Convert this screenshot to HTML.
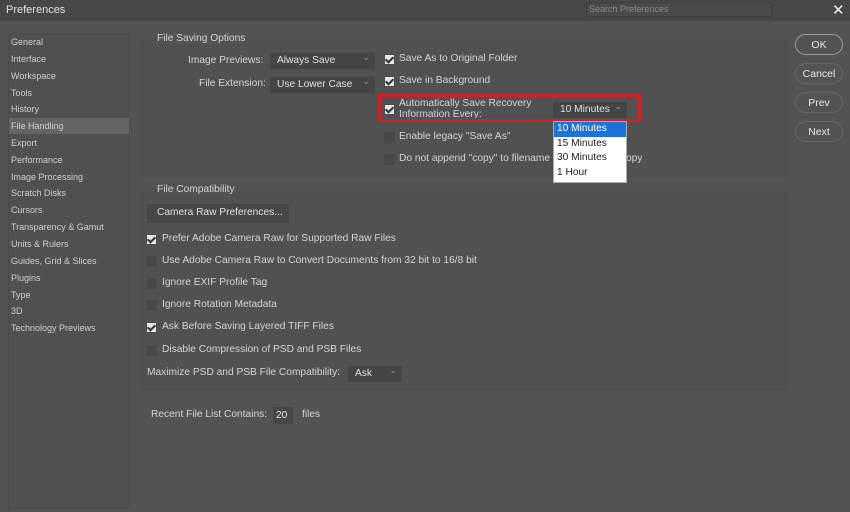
<!DOCTYPE html>
<html><head><style>
*{margin:0;padding:0;box-sizing:border-box}
body{width:850px;height:512px;background:#535353;font-family:"Liberation Sans",sans-serif;font-size:10.2px;color:#d4d4d4;position:relative;overflow:hidden}
.a{position:absolute;white-space:nowrap}
.title{left:0;top:0;width:850px;height:21px;background:#474747}
.side{left:8px;top:33px;width:122px;height:476px;background:#505050;border:1px solid #4a4a4a}
.si{left:11px;font-size:9px;color:#cfcfcf}
.box{border:1px solid #4d4d4d;background:#515151}
.sel{background:#454545;color:#e0e0e0;height:16px;padding:2px 0 0 7px}
.sel:after{content:"⌄";position:absolute;right:5px;top:-1px;color:#999;font-size:9px}
.cb{width:11px;height:11px;background:#484848;border:1px solid #4a4a4a}
.cb.on{background:#e6e6e6}
.cb.on:after{content:"";position:absolute;left:2px;top:0px;width:3px;height:6px;border:solid #333;border-width:0 2px 2px 0;transform:rotate(45deg)}
.btn{left:795px;width:48px;height:21px;border:1.5px solid #9a9a9a;border-radius:11px;text-align:center;line-height:20px;color:#e6e6e6;font-size:10.5px}
.btn.n{border-color:#666}
</style></head><body>
<div class="a title"></div>
<div class="a" style="left:6px;top:4px;font-size:11px;color:#e0e0e0">Preferences</div>
<div class="a" style="left:586px;top:2px;width:186px;height:15px;background:#4a4a4a;border:1px solid #3e3e3e;color:#8a8a8a;font-size:9px;padding:1px 2px">Search Preferences</div>
<div class="a" style="left:832px;top:1px;font-size:15px;color:#eee">✕</div>

<div class="a side"></div>
<div class="a" style="left:9px;top:118px;width:120px;height:16px;background:#646464"></div>
<div class="a si" style="top:37px">General</div>
<div class="a si" style="top:54px">Interface</div>
<div class="a si" style="top:71px">Workspace</div>
<div class="a si" style="top:88px">Tools</div>
<div class="a si" style="top:104px">History</div>
<div class="a si" style="top:121px">File Handling</div>
<div class="a si" style="top:138px">Export</div>
<div class="a si" style="top:155px">Performance</div>
<div class="a si" style="top:172px">Image Processing</div>
<div class="a si" style="top:188px">Scratch Disks</div>
<div class="a si" style="top:205px">Cursors</div>
<div class="a si" style="top:222px">Transparency &amp; Gamut</div>
<div class="a si" style="top:239px">Units &amp; Rulers</div>
<div class="a si" style="top:256px">Guides, Grid &amp; Slices</div>
<div class="a si" style="top:273px">Plugins</div>
<div class="a si" style="top:290px">Type</div>
<div class="a si" style="top:306px">3D</div>
<div class="a si" style="top:323px">Technology Previews</div>

<div class="a box" style="left:141px;top:40px;width:646px;height:137px"></div>
<div class="a" style="left:154px;top:33px;background:#535353;padding:0 3px">File Saving Options</div>
<div class="a" style="left:188px;top:55px">Image Previews:</div>
<div class="a sel" style="left:270px;top:53px;width:105px">Always Save</div>
<div class="a" style="left:199px;top:78px">File Extension:</div>
<div class="a sel" style="left:270px;top:77px;width:105px">Use Lower Case</div>
<div class="a cb on" style="left:384px;top:54px"></div><div class="a" style="left:399px;top:53px">Save As to Original Folder</div>
<div class="a cb on" style="left:384px;top:76px"></div><div class="a" style="left:399px;top:75px">Save in Background</div>
<div class="a cb on" style="left:384px;top:104px"></div>
<div class="a" style="left:399px;top:98px;line-height:11px;height:20px;overflow:hidden">Automatically Save Recovery<br>Information Every:</div>
<div class="a sel" style="left:553px;top:102px;width:74px">10 Minutes</div>
<div class="a" style="left:378px;top:94px;width:263px;height:28px;border:3px solid #d2202b"></div>
<div class="a cb" style="left:384px;top:132px"></div><div class="a" style="left:399px;top:131px">Enable legacy "Save As"</div>
<div class="a cb" style="left:384px;top:154px"></div><div class="a" style="left:399px;top:153px">Do not append "copy" to filename when saving a copy</div>
<div class="a" style="left:553px;top:121px;width:74px;height:62px;background:#fff;border:1px solid #aaa;color:#222;line-height:14.5px;padding-left:3px">
<div style="background:#1e73d8;color:#fff;margin-left:-3px;padding-left:3px">10 Minutes</div>15 Minutes<br>30 Minutes<br>1 Hour</div>

<div class="a box" style="left:141px;top:192px;width:646px;height:198px"></div>
<div class="a" style="left:154px;top:184px;background:#535353;padding:0 3px">File Compatibility</div>
<div class="a" style="left:147px;top:204px;width:142px;height:19px;background:#474747;padding:3px 0 0 10px;color:#e0e0e0">Camera Raw Preferences...</div>
<div class="a cb on" style="left:146px;top:234px"></div><div class="a" style="left:162px;top:233px">Prefer Adobe Camera Raw for Supported Raw Files</div>
<div class="a cb" style="left:146px;top:256px"></div><div class="a" style="left:162px;top:255px">Use Adobe Camera Raw to Convert Documents from 32 bit to 16/8 bit</div>
<div class="a cb" style="left:146px;top:278px"></div><div class="a" style="left:162px;top:277px">Ignore EXIF Profile Tag</div>
<div class="a cb" style="left:146px;top:300px"></div><div class="a" style="left:162px;top:299px">Ignore Rotation Metadata</div>
<div class="a cb on" style="left:146px;top:322px"></div><div class="a" style="left:162px;top:321px">Ask Before Saving Layered TIFF Files</div>
<div class="a cb" style="left:146px;top:345px"></div><div class="a" style="left:162px;top:344px">Disable Compression of PSD and PSB Files</div>
<div class="a" style="left:147px;top:367px">Maximize PSD and PSB File Compatibility:</div>
<div class="a sel" style="left:348px;top:366px;width:54px">Ask</div>
<div class="a" style="left:151px;top:409px">Recent File List Contains:</div>
<div class="a" style="left:273px;top:407px;width:20px;height:17px;background:#474747;color:#e6e6e6;padding:3px 0 0 3px">20</div>
<div class="a" style="left:302px;top:409px">files</div>

<div class="a btn" style="top:34px">OK</div>
<div class="a btn n" style="top:63px">Cancel</div>
<div class="a btn n" style="top:92px">Prev</div>
<div class="a btn n" style="top:121px">Next</div>
</body></html>
